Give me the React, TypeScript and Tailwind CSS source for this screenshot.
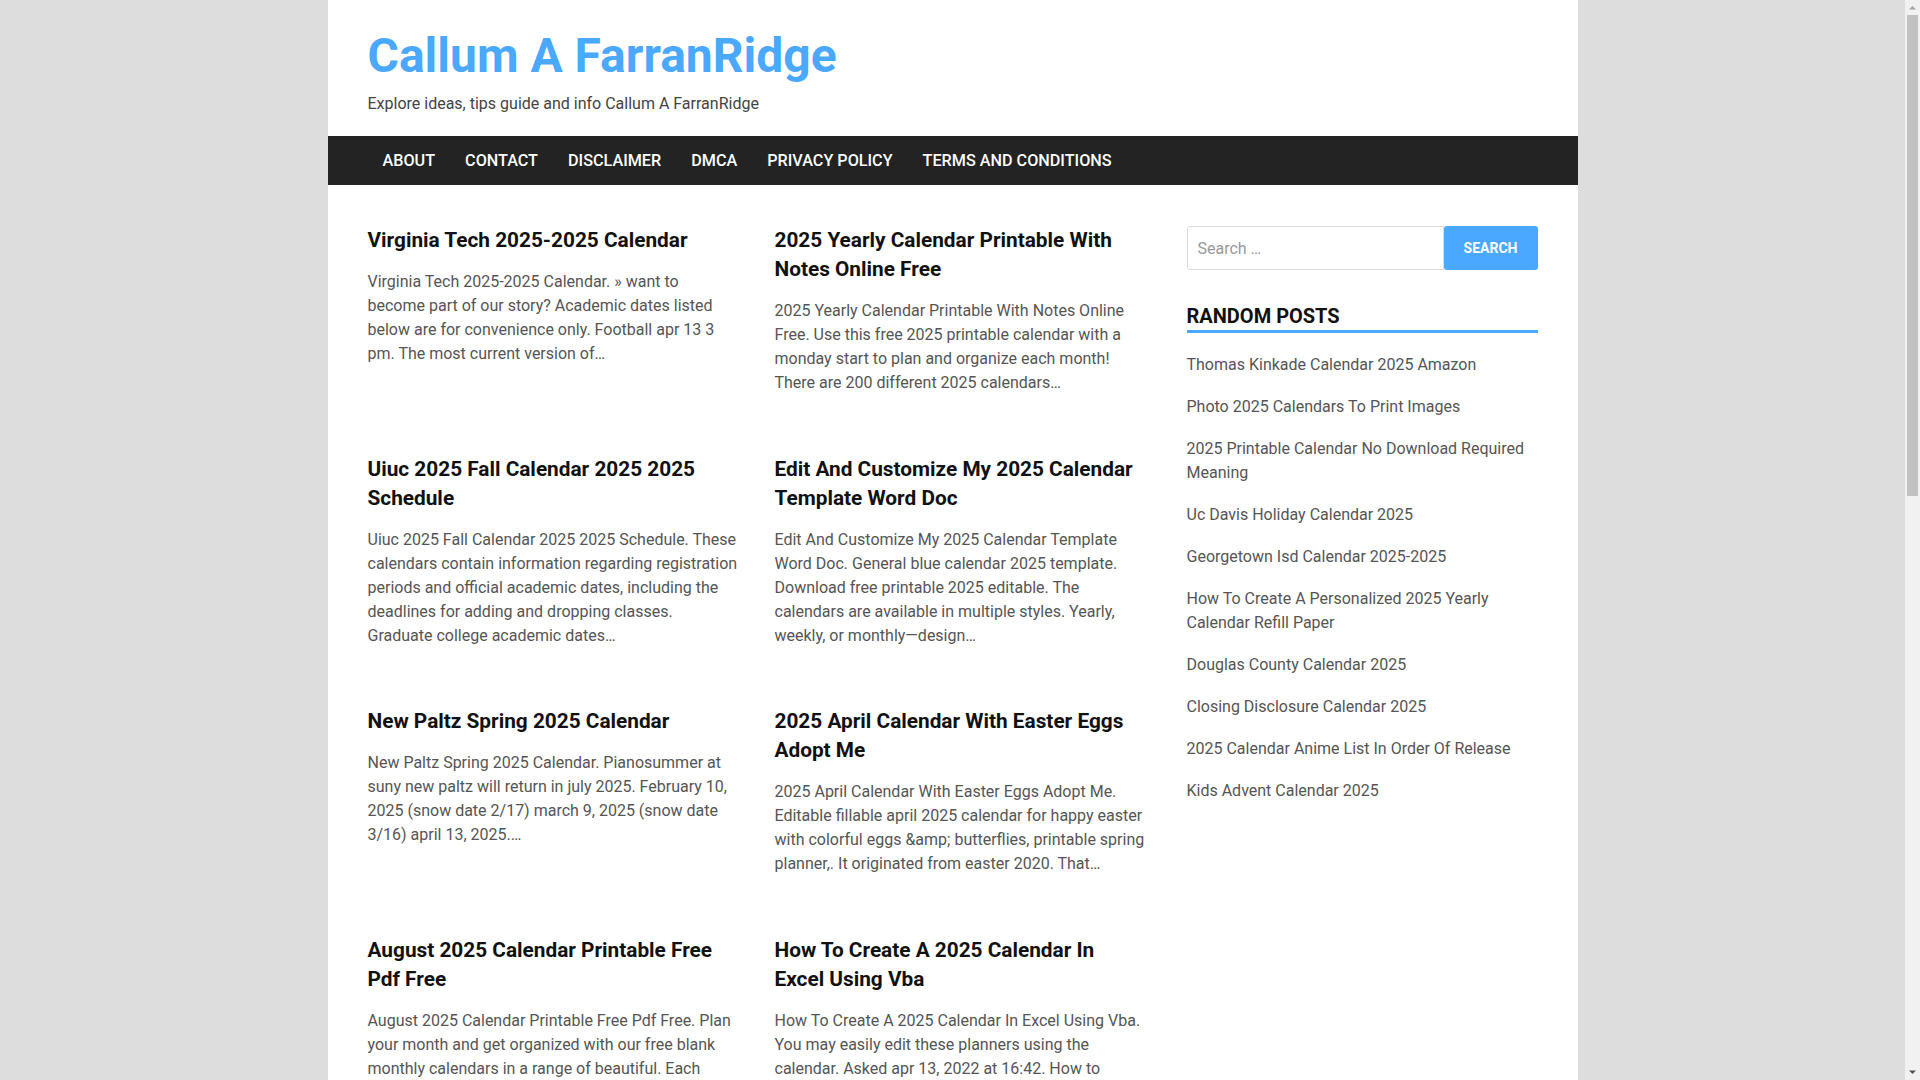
import React from 'react';

const navItems = ['About', 'Contact', 'Disclaimer', 'DMCA', 'Privacy Policy', 'Terms and Conditions'];

const posts = [
  {
    title: 'Virginia Tech 2025-2025 Calendar',
    excerpt:
      'Virginia Tech 2025-2025 Calendar. » want to become part of our story? Academic dates listed below are for convenience only. Football apr 13 3 pm. The most current version of…',
  },
  {
    title: '2025 Yearly Calendar Printable With Notes Online Free',
    excerpt:
      '2025 Yearly Calendar Printable With Notes Online Free. Use this free 2025 printable calendar with a monday start to plan and organize each month! There are 200 different 2025 calendars…',
  },
  {
    title: 'Uiuc 2025 Fall Calendar 2025 2025 Schedule',
    excerpt:
      'Uiuc 2025 Fall Calendar 2025 2025 Schedule. These calendars contain information regarding registration periods and official academic dates, including the deadlines for adding and dropping classes. Graduate college academic dates…',
  },
  {
    title: 'Edit And Customize My 2025 Calendar Template Word Doc',
    excerpt:
      'Edit And Customize My 2025 Calendar Template Word Doc. General blue calendar 2025 template. Download free printable 2025 editable. The calendars are available in multiple styles. Yearly, weekly, or monthly—design…',
  },
  {
    title: 'New Paltz Spring 2025 Calendar',
    excerpt:
      'New Paltz Spring 2025 Calendar. Pianosummer at suny new paltz will return in july 2025. February 10, 2025 (snow date 2/17) march 9, 2025 (snow date 3/16) april 13, 2025.…',
  },
  {
    title: '2025 April Calendar With Easter Eggs Adopt Me',
    excerpt:
      '2025 April Calendar With Easter Eggs Adopt Me. Editable fillable april 2025 calendar for happy easter with colorful eggs &amp; butterflies, printable spring planner,. It originated from easter 2020. That…',
  },
  {
    title: 'August 2025 Calendar Printable Free Pdf Free',
    excerpt:
      'August 2025 Calendar Printable Free Pdf Free. Plan your month and get organized with our free blank monthly calendars in a range of beautiful. Each calendar is available in several formats for…',
  },
  {
    title: 'How To Create A 2025 Calendar In Excel Using Vba',
    excerpt:
      'How To Create A 2025 Calendar In Excel Using Vba. You may easily edit these planners using the calendar. Asked apr 13, 2022 at 16:42. How to create a calendar in excel with formulas…',
  },
  {
    title: 'Thomas Kinkade Calendar 2025 Amazon',
    excerpt:
      'Thomas Kinkade Calendar 2025 Amazon. Find the perfect wall calendar for the year ahead with paintings of cozy cottages and gardens. Free shipping on eligible orders…',
  },
  {
    title: 'Douglas County Calendar 2025',
    excerpt:
      'Douglas County Calendar 2025. View the school year calendar including holidays, breaks and important dates for students and families in the district…',
  },
];

const randomPosts = [
  'Thomas Kinkade Calendar 2025 Amazon',
  'Photo 2025 Calendars To Print Images',
  '2025 Printable Calendar No Download Required Meaning',
  'Uc Davis Holiday Calendar 2025',
  'Georgetown Isd Calendar 2025-2025',
  'How To Create A Personalized 2025 Yearly Calendar Refill Paper',
  'Douglas County Calendar 2025',
  'Closing Disclosure Calendar 2025',
  '2025 Calendar Anime List In Order Of Release',
  'Kids Advent Calendar 2025',
];

// Browser scrollbar, drawn since the page is photographed without one
const Scrollbar: React.FC = () => (
  <div className="flex h-screen w-[15px] shrink-0 flex-col items-center bg-[#f1f1f1]">
    <svg width="15" height="15" viewBox="0 0 15 15" className="shrink-0">
      <path d="M4 9.5 L7.5 6 L11 9.5 Z" fill="#a3a3a3" />
    </svg>
    <div className="h-[481px] w-[11px] bg-[#c1c1c1]" />
    <div className="flex-1" />
    <svg width="15" height="15" viewBox="0 0 15 15" className="shrink-0">
      <path d="M4 5.5 L7.5 9 L11 5.5 Z" fill="#505050" />
    </svg>
  </div>
);

const App: React.FC = () => {
  return (
    <div className="flex h-screen overflow-hidden bg-[#dddddd] font-['Roboto',sans-serif]">
      <div className="min-w-0 flex-1 overflow-hidden">
        <div className="mx-auto w-[1250px] bg-white">
          {/* Header */}
          <header className="px-10 pt-[26px] pb-[20px]">
            <h1 className="text-[48px] font-bold leading-[60px] text-[#4aa8ff]">Callum A FarranRidge</h1>
            <p className="mt-[6px] text-[16px] leading-6 text-[#444444]">Explore ideas, tips guide and info Callum A FarranRidge</p>
          </header>

          {/* Navigation */}
          <nav className="flex h-[49px] items-center bg-[#232323] px-10">
            {navItems.map(item => (
              <a key={item} className="px-[15px] text-[16.2px] font-medium uppercase leading-[49px] text-white">
                {item}
              </a>
            ))}
          </nav>

          {/* Content */}
          <div className="flex justify-between px-10 pt-[41px] pb-16">
            <main className="w-[777px] shrink-0">
              <div className="grid grid-cols-[370px_370px] gap-x-[37px] gap-y-[59.5px]">
                {posts.map(post => (
                  <article key={post.title}>
                    <h2 className="text-[20.8px] font-bold leading-[29px] text-[#111111]">{post.title}</h2>
                    <p className="mt-[15px] text-[16px] leading-6 text-[#555555]">{post.excerpt}</p>
                  </article>
                ))}
              </div>
            </main>

            <aside className="w-[351px] shrink-0">
              <form className="flex h-[44px]">
                <input
                  type="search"
                  placeholder="Search …"
                  className="h-full min-w-0 flex-1 rounded-l-[3px] border border-[#dddddd] px-[10px] text-[16px] text-[#555555] outline-none placeholder:text-[#999999]"
                />
                <button
                  type="button"
                  className="h-full w-[94px] rounded-[3px] bg-[#4aa8ff] text-[14px] font-bold uppercase text-white"
                >
                  Search
                </button>
              </form>

              <section className="mt-[34px]">
                <h3 className="border-b-[3px] border-[#4aa8ff] pb-[2px] text-[20px] font-bold uppercase leading-6 text-[#111111]">
                  Random Posts
                </h3>
                <ul className="mt-[20px] flex flex-col gap-[18px]">
                  {randomPosts.map(p => (
                    <li key={p} className="text-[16px] leading-6 text-[#555555]">
                      {p}
                    </li>
                  ))}
                </ul>
              </section>
            </aside>
          </div>
        </div>
      </div>
      <Scrollbar />
    </div>
  );
};

export default App;
